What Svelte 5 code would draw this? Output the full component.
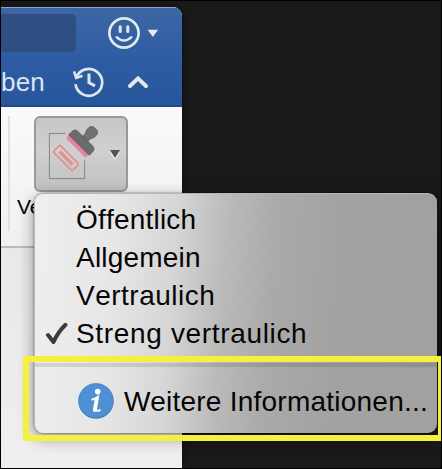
<script>
  const levels = [
    { label: 'Öffentlich', spacing: 0.2 },
    { label: 'Allgemein', spacing: 0.2 },
    { label: 'Vertraulich', spacing: 0.5 },
    { label: 'Streng vertraulich', spacing: 0.66, checked: true }
  ];
</script>

<main>
  <section class="window">
    <header>
      <div class="toprow">
        <div class="search"></div>
        <svg class="smile" width="36" height="36" viewBox="0 0 36 36" fill="none" stroke="#dfe6f3" stroke-linecap="round">
          <circle cx="18" cy="18" r="14.6" stroke-width="2.7" />
          <path d="M14.2 11.8v4.6M21.8 11.8v4.6" stroke-width="3.1" />
          <path d="M10.6 22.2Q18 29 25.4 22.2" stroke-width="2.4" />
        </svg>
        <svg class="down" width="12" height="9" viewBox="0 0 12 9"><path d="M.7.7h10.4L5.9 8z" fill="#e7ecf6" /></svg>
      </div>
      <div class="secondrow">
        <span>ben</span>
        <svg class="history" width="34" height="34" viewBox="0 0 34 34" fill="none" stroke="#dfe6f3">
          <path d="M5.2 12.7A13.4 13.4 0 1 1 4.5 19.3" stroke-width="2.7" />
          <path d="M3 6.4 5.2 13 11.5 10.8" stroke-width="2.5" />
          <path d="M18 8.5v9.2l6 3.2" stroke-width="3" />
        </svg>
        <svg class="up" width="22" height="16" viewBox="0 0 22 16"><path d="M3 12 11 4.4 19 12" fill="none" stroke="#e1e7f3" stroke-width="4" stroke-linecap="round" /></svg>
      </div>
    </header>
    <div class="ribbon">
      <div class="divider"></div>
      <div class="tool">
        <div class="button">
          <svg width="94" height="75" viewBox="34 116 94 75">
            <path d="M65.5 133.4H49.4V178.6H84.6V160.5" fill="none" stroke="#858585" />
            <g transform="translate(66 158) rotate(45)" fill="none" stroke="#df9290">
              <rect x="-13.5" y="-4.9" width="27" height="9.8" rx="1.5" stroke-width="1.8" />
              <rect x="-9.2" y="-1.8" width="18.4" height="3.6" fill="#df9290" stroke="none" />
            </g>
            <g transform="translate(81.4 142.6) rotate(45)">
              <rect x="-14" y="3" width="27.5" height="4.8" fill="#e8829f" />
              <path d="M-3.8-3.5Q-2.5-8-5.3-13Q-6.5-20 0-20Q6.5-20 5.3-13Q2.5-8 3.8-3.5z" fill="#717171" stroke="#5d5d5d" stroke-width=".8" />
              <path d="M-14.5 3.5V-1Q-14.5-5.5-10-5.5H10Q14.5-5.5 14.5-1V3.5z" fill="#6c6c6c" stroke="#585858" stroke-width=".8" />
            </g>
            <path d="m110 152 4.8 7.2 5.2-7.2" fill="none" stroke="#eee" />
            <path d="M110 150h10l-5 7.8z" fill="#555" />
          </svg>
        </div>
        <div class="caption">Ve</div>
      </div>
    </div>
    <div class="canvas"></div>
  </section>

  <section class="menu">
    {#each levels as level}
      <div class="item">
        <div class="mark">
          {#if level.checked}
            <svg width="24" height="24" viewBox="0 0 24 24"><path d="M3 13 8.5 20Q13 10 20.5 2.8" fill="none" stroke="#3c3c3c" stroke-width="4" stroke-linecap="round" stroke-linejoin="round" /></svg>
          {/if}
        </div>
        <span style:letter-spacing="{level.spacing}px">{level.label}</span>
      </div>
    {/each}
    <hr />
    <div class="info">
      <svg width="36" height="36" viewBox="0 0 36 36">
        <circle cx="18" cy="18" r="17.8" fill="#3f7fc2" />
        <circle cx="18" cy="17.6" r="17" fill="#4e90d3" />
        <circle cx="19.7" cy="8.6" r="2.8" fill="#fff" />
        <path d="M14.3 16.5Q18 15.5 19.8 13.9L17.5 25.3Q17.1 28.8 21.8 27.2" fill="none" stroke="#fff" stroke-width="2" stroke-linecap="round" />
        <path d="M18.8 15.6 16.8 27" stroke="#fff" stroke-width="3.8" stroke-linecap="round" />
      </svg>
      <span>Weitere Informationen...</span>
    </div>
  </section>
  <div class="highlight"></div>
</main>

<style>
  :global(body) { margin: 0; background: #000; }
  main {
    position: relative; box-sizing: border-box; width: 442px; height: 469px; overflow: hidden;
    border: 1px solid #000; background: #191919; font-family: "Liberation Sans", Arial, sans-serif; color: #050505;
  }
  .window {
    width: 181px; height: 461px; margin-top: 6px; overflow: hidden; border-radius: 0 9px 0 0;
    display: flex; flex-direction: column; background: #ededed; box-shadow: 0 0 8px #0008;
  }
  header {
    box-sizing: border-box; height: 100px; flex: none; background: linear-gradient(#3e66a4, #2e5ca4 55%, #28569c);
    border-top: 1px solid #8ba4cc; border-bottom: 2px solid #254a87; color: #dce4f2;
  }
  .toprow { display: flex; height: 50px; }
  .search { width: 75px; height: 38px; margin-top: 6px; border-radius: 0 5px 5px 0; background: #2f4e82; }
  .smile { margin: 7px 0 0 30px; filter: drop-shadow(0 1px 1px #1746); }
  .down { margin: 21px 0 0 5px; }
  .secondrow { display: flex; height: 47px; }
  .secondrow span { width: 70px; font-size: 26px; line-height: 30px; margin-top: 9px; letter-spacing: .2px; }
  .history { margin-top: 7px; filter: drop-shadow(0 1px 1px #1746); }
  .up { margin: 16px 0 0 22px; filter: drop-shadow(0 1px 1px #1746); }
  .ribbon {
    box-sizing: border-box; display: flex; height: 141px; flex: none;
    background: linear-gradient(#f9fafa, #f0f0f0); border-bottom: 2px solid #bbb;
  }
  .divider { width: 2px; height: 115px; margin: 9px 0 0 7px; background: #dfe0e0; }
  .tool { width: 140px; padding: 9px 0 0 6px; }
  .button {
    box-sizing: border-box; width: 94px; height: 76px; margin-left: 18px; border: 2px solid #999; border-radius: 6px;
    background: linear-gradient(#c6c6c6, #d0d0d0 45%, #c0c0c0);
  }
  .button svg { display: block; margin: -2px; }
  .caption { font-size: 21px; line-height: 24px; margin-top: 3px; white-space: nowrap; padding-left: 1px; }
  .canvas { flex: 1; background: linear-gradient(#e9e9e9, #efefef); }
  .menu {
    position: absolute; left: 33px; top: 192px; box-sizing: border-box; width: 403px; height: 240px; padding-top: 7px;
    border-radius: 9px; border-top: 1px solid #b5b5b5; border-left: 1px solid #b9b9b9;
    background: linear-gradient(94deg, #efefef 0, #e6e6e6 20%, #d6d6d6 34%, #bbb 46%, #aaa 58%, #a1a2a1 75%, #a2a1a0 100%);
    box-shadow: 0 5px 16px #0006, 0 0 2px #0008; font-size: 28px;
  }
  .item { display: flex; height: 38px; line-height: 38px; white-space: nowrap; font-kerning: none; }
  .mark { width: 41px; display: flex; align-items: center; padding-left: 0; box-sizing: border-box; }
  .mark svg { margin-left: 10px; }
  hr { border: 0; height: 4px; margin: 10px 0 0; background: #0000001c; }
  .info { display: flex; height: 68px; align-items: center; padding-left: 43px; white-space: nowrap; }
  .info span { margin-left: 10px; letter-spacing: .24px; padding-top: 1px; }
  .highlight {
    position: absolute; left: 22px; top: 355px; box-sizing: border-box; width: 419px; height: 85px;
    border: 6px solid #f4f13e; border-right-width: 4px;
  }
</style>
